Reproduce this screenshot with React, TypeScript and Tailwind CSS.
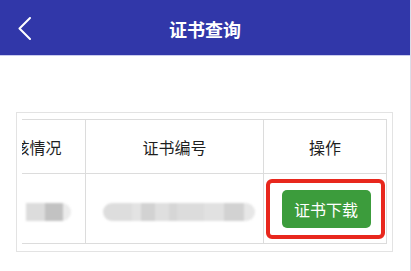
const blur1 = [
  { w: 19, c: "bg-[#dcdcdc]" },
  { w: 18, c: "bg-[#c2c2c2]" },
  { w: 8, c: "bg-[#ebebeb]" },
];

const blur2 = [
  { w: 29, c: "bg-[#dddddd]" },
  { w: 9, c: "bg-[#e3e3e3]" },
  { w: 14, c: "bg-[#d2d2d2]" },
  { w: 14, c: "bg-[#dfdfdf]" },
  { w: 8, c: "bg-[#d6d6d6]" },
  { w: 27, c: "bg-[#dcdcdc]" },
  { w: 20, c: "bg-[#e1e1e1]" },
  { w: 20, c: "bg-[#d2d2d2]" },
  { w: 11, c: "bg-[#e7e7e7]" },
];

const BlurBar = ({ parts, className }: { parts: { w: number; c: string }[]; className: string }) => (
  <div className={`flex h-[18px] overflow-hidden blur-[1px] ${className}`}>
    {parts.map((p, i) => (
      <div key={i} className={`h-full ${p.c}`} style={{ width: p.w }} />
    ))}
  </div>
);

const App = () => {
  return (
    <div
      className="w-[411px] h-[271px] bg-white border-r border-[#dcdde8] overflow-hidden"
      style={{ fontFamily: '"Noto Sans CJK SC", "Noto Sans", sans-serif' }}
    >
      {/* header */}
      <div className="relative h-[56px] bg-[#3137a9] border-b border-[#c9cbee] flex items-center justify-center">
        <svg
          className="absolute left-[18px] top-[17px]"
          width="13"
          height="23"
          viewBox="0 0 13 23"
          fill="none"
        >
          <polyline points="12,1 1.5,11.5 12,22" stroke="white" strokeWidth="2" strokeLinecap="round" strokeLinejoin="round" />
        </svg>
        <span className="text-white text-[18px] font-bold mt-[3px]">证书查询</span>
      </div>

      <div className="pt-[56px] pl-[16px] pr-[17px]">
        <div className="border border-[#e3e3e3] pt-[6px] pb-[7px] pl-[5px] pr-[5px]">
          <div className="overflow-hidden w-[365px]">
            <div className="ml-[-48px] w-[413px] text-[16px] text-[#1f1f1f]">
              {/* head row */}
              <div className="flex h-[55px] border-t border-[#dcdcdc]">
                <div className="w-[112px] border-r border-b border-[#dcdcdc] flex items-center justify-center">
                  考核情况
                </div>
                <div className="w-[178px] border-r border-b border-[#dcdcdc] flex items-center justify-center">
                  证书编号
                </div>
                <div className="w-[123px] border-r border-b border-[#dcdcdc] flex items-center justify-center">
                  操作
                </div>
              </div>
              {/* body row */}
              <div className="flex h-[70px]">
                <div className="w-[112px] border-r border-b border-[#dcdcdc] flex items-center justify-end pr-[14px]">
                  <BlurBar parts={blur1} className="rounded-r-full mt-[6px]" />
                </div>
                <div className="w-[178px] border-r border-b border-[#dcdcdc] flex items-center pl-[17px]">
                  <BlurBar parts={blur2} className="rounded-full mt-[6px]" />
                </div>
                <div className="w-[123px] border-r border-b border-[#dcdcdc] flex items-center justify-center">
                  <div className="w-[119px] h-[60px] border-4 border-[#e8271d] rounded-[6px] flex items-center justify-center pl-[2px]">
                    <button className="w-[89px] h-[38px] rounded-[5px] bg-[#3c9c3c] text-white text-[16px]">
                      证书下载
                    </button>
                  </div>
                </div>
              </div>
            </div>
          </div>
        </div>
      </div>
    </div>
  );
};

export default App;
